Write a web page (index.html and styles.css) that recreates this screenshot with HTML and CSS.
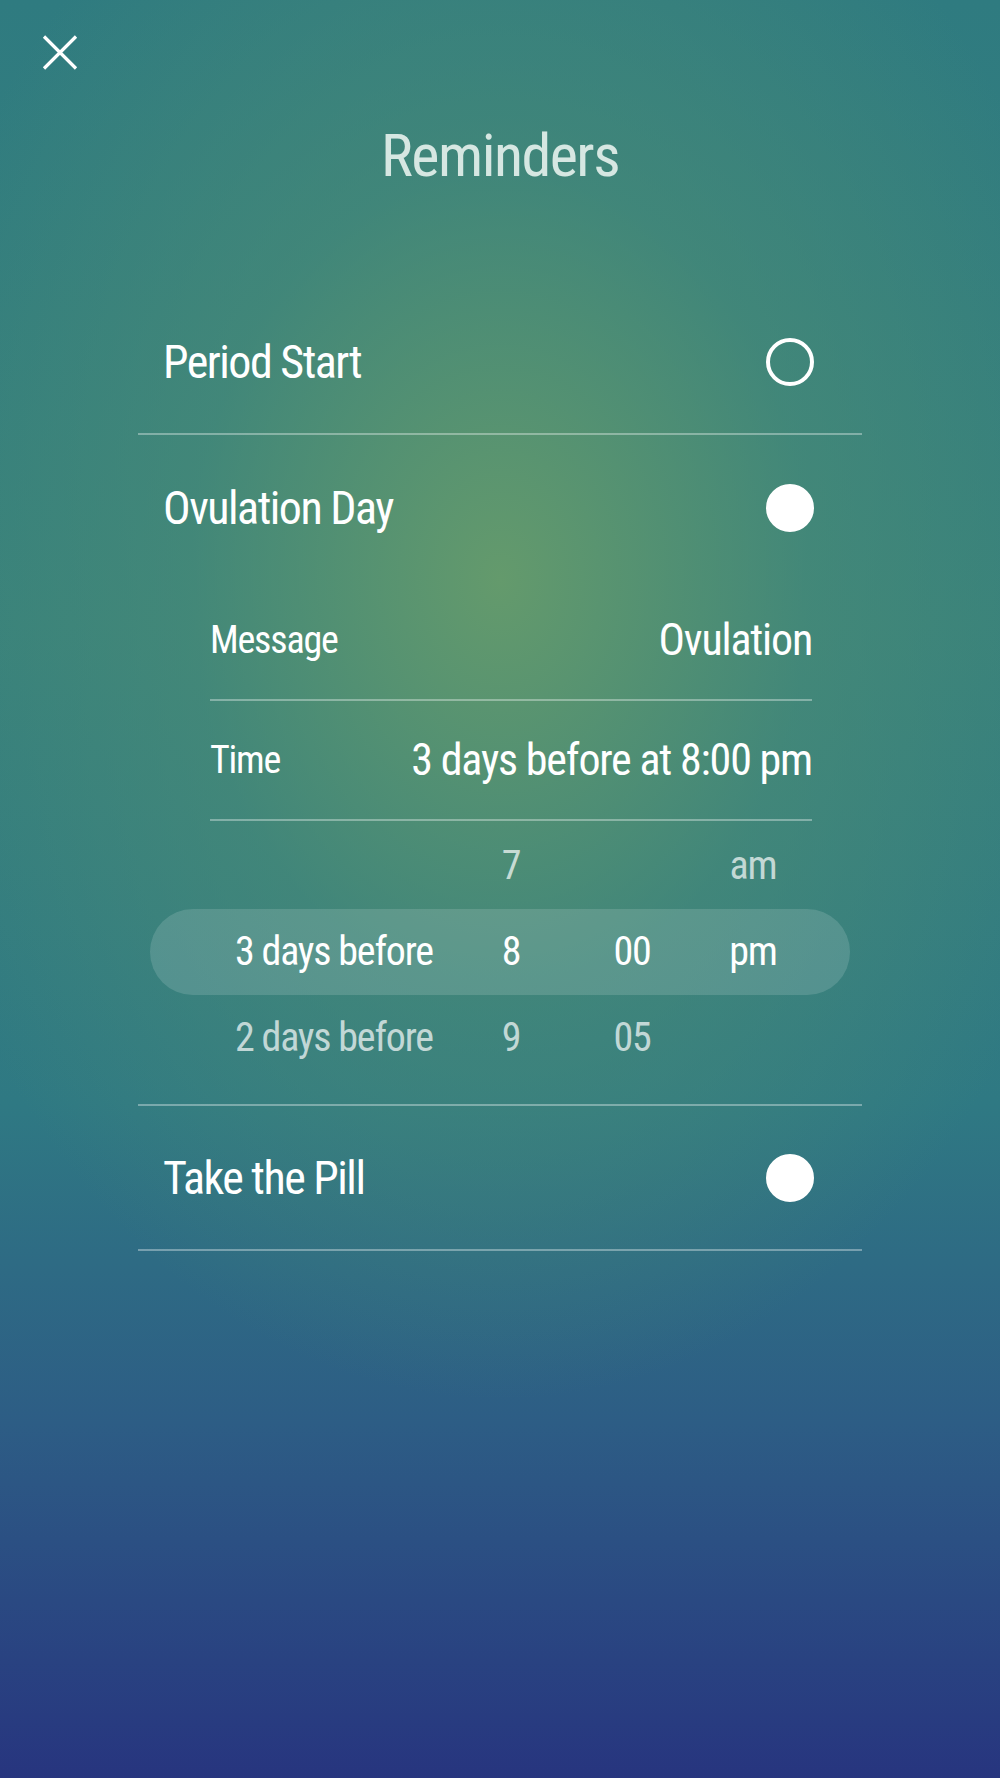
FILE: index.html
```html
<!DOCTYPE html>
<html lang="en">
<head>
  <meta charset="UTF-8" />
  <meta name="viewport" content="width=device-width, initial-scale=1.0"/>
  <title>Reminders</title>
  <link rel="stylesheet" href="styles.css">
</head>
<body>
  <header class="top">
    <button class="close" aria-label="Close">
      <svg width="36" height="35" viewBox="0 0 36 35">
        <path d="M2 1.5 L34 33.5 M34 1.5 L2 33.5" stroke="#fff" stroke-width="3.2" fill="none"/>
      </svg>
    </button>
    <h1>Reminders</h1>
  </header>

  <main class="list">
    <div class="row">
      <span>Period Start</span>
      <span class="toggle"></span>
    </div>

    <div class="row">
      <span>Ovulation Day</span>
      <span class="toggle on"></span>
    </div>
    <div class="details">
      <div class="sub-row">
        <span class="sub-label">Message</span>
        <span class="sub-value">Ovulation</span>
      </div>
      <div class="sub-row">
        <span class="sub-label">Time</span>
        <span class="sub-value">3 days before at 8:00 pm</span>
      </div>
      <div class="picker">
        <div class="pick-row">
          <span></span><span class="c">7</span><span class="c"></span><span class="c">am</span>
        </div>
        <div class="pick-row selected">
          <span>3 days before</span><span class="c">8</span><span class="c">00</span><span class="c">pm</span>
        </div>
        <div class="pick-row">
          <span>2 days before</span><span class="c">9</span><span class="c">05</span><span class="c"></span>
        </div>
      </div>
    </div>

    <div class="row">
      <span>Take the Pill</span>
      <span class="toggle on"></span>
    </div>
  </main>
</body>
</html>
```

FILE: styles.css
```css
body {
  margin: 0;
  min-height: 1778px;
  font-family: "Liberation Sans Narrow", "Roboto Condensed", "DejaVu Sans Condensed", "Liberation Sans", sans-serif;
  color: #fff;
  background:
    radial-gradient(ellipse 620px 820px at 50% 580px, #649a6c 0%, rgba(74,140,118,0.6) 50%, rgba(50,125,128,0) 100%),
    linear-gradient(180deg, #2f7b80 0%, #37817c 35%, #2f7983 62%, #2d5d85 80%, #27357f 100%);
}

.top { padding-top: 35px; }
.close {
  display: block;
  margin-left: 42px;
  padding: 0;
  border: 0;
  background: none;
  line-height: 0;
}
h1 {
  margin: 56px 0 105px;
  font-size: 60px;
  font-weight: normal;
  line-height: 1;
  letter-spacing: -1.5px;
  text-align: center;
  color: #d6e7e2;
}

.list { width: 724px; margin: 0 auto; }

.row {
  display: flex;
  justify-content: space-between;
  align-items: center;
  height: 142px;
  padding: 0 48px 0 25px;
  font-size: 46px;
  line-height: 1;
  letter-spacing: -1.5px;
  border-bottom: 2px solid rgba(255,255,255,0.35);
}
.row:nth-of-type(2) { height: 146px; border-bottom: 0; }
.row:last-child { height: 143px; }

.toggle {
  width: 48px; height: 48px;
  border: 4px solid #fff;
  border-radius: 50%;
  box-sizing: border-box;
}
.toggle.on { background: #fff; }

.details { border-bottom: 2px solid rgba(255,255,255,0.35); }
.sub-row {
  display: flex;
  justify-content: space-between;
  align-items: center;
  height: 118px;
  margin: 0 50px 0 72px;
  line-height: 1;
  border-bottom: 2px solid rgba(255,255,255,0.35);
}
.sub-label { font-size: 38px; letter-spacing: -1.2px; }
.sub-value { font-size: 44px; letter-spacing: -1.2px; }

.picker { margin: 0 12px; padding: 2px 0 23px; }
.pick-row {
  display: grid;
  grid-template-columns: 235px 82px 160px 82px;
  align-items: center;
  height: 86px;
  padding-left: 85px;
  font-size: 40px;
  line-height: 1;
  letter-spacing: -1.2px;
  color: rgba(255,255,255,0.7);
}
.pick-row .c { text-align: center; }
.pick-row.selected {
  color: #fff;
  background: rgba(255,255,255,0.14);
  border-radius: 44px;
}
```
